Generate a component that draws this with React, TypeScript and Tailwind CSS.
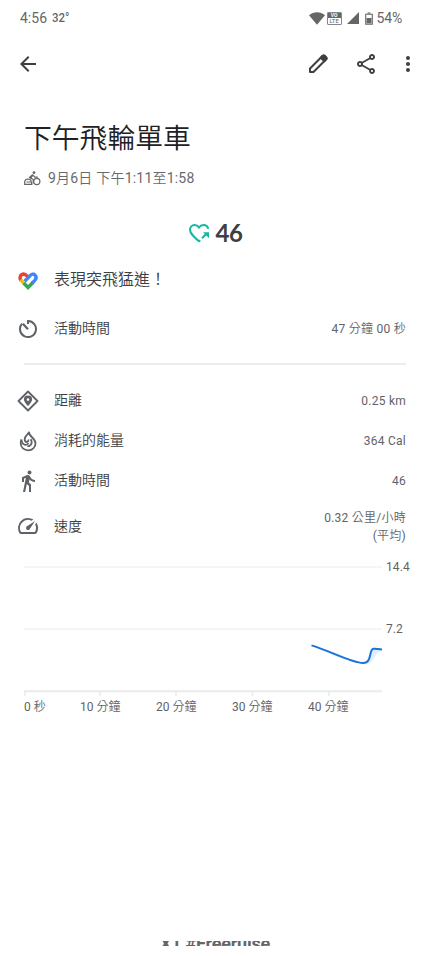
import type { ReactNode } from "react";
import { MdArrowBack, MdDirectionsWalk, MdMoreVert, MdOutlineShare, MdOutlineSpeed } from "react-icons/md";

// Sets the Han characters a little lighter than the Latin ones beside them.
function Mixed({ text }: { text: string }) {
  return (
    <>
      {text.split(/([\u4e00-\u9fff]+)/).map((part, i) =>
        i % 2 ? <span key={i} className="font-[350]">{part}</span> : part,
      )}
    </>
  );
}

function StatusBar() {
  return (
    <header className="flex h-9 items-center justify-between pl-5 pr-7 text-[#666]">
      <div className="flex items-center gap-[5px]">
        <span className="text-sm leading-5">4:56</span>
        <span className="origin-left scale-x-[0.95] text-xs font-medium leading-5">32°</span>
      </div>
      <div className="flex items-center">
        <svg width="16" height="13" viewBox="0 0 16 13" fill="#666">
          <path d="M0 3.200C4.500-.7 11.500-.7 16 3.200L8 12.800Z" />
        </svg>
        <span className="ml-[2px] flex h-[13px] w-[15px] flex-col overflow-hidden rounded-[1px] border border-[#888] text-center text-[6px] leading-[6px]">
          <span className="h-[5px] bg-[#666] text-[5px] font-bold leading-[5px] text-white">VO</span>
          <span className="leading-[6px]">LTE</span>
        </span>
        <svg className="ml-[5px]" width="12" height="12" viewBox="0 0 12 12" fill="#666">
          <path d="M12 0v12H0Z" />
        </svg>
        <svg className="ml-[6px]" width="8" height="13" viewBox="0 0 8 13" fill="none" stroke="#666">
          <path d="M2.500 1h3M.7 2.200h6.600v10H.7Z" strokeWidth="1.100" />
          <path d="M1.500 6h5v5.500h-5Z" fill="#666" stroke="none" />
        </svg>
        <span className="ml-1 text-sm leading-5 tracking-[-0.2px]">54%</span>
      </div>
    </header>
  );
}

function PencilIcon() {
  return (
    <svg className="ml-auto" width="24" height="24" viewBox="0 0 24 24" fill="none" stroke="#3c4043" strokeWidth="2" strokeLinejoin="round">
      <path d="M4 20v-3.500L16.700 3.800a1.300 1.300 0 0 1 1.900 0l1.600 1.600a1.300 1.300 0 0 1 0 1.900L7.500 20Z" />
      <path d="m14.800 5.700 3.500 3.500 1.900-1.900a1.300 1.300 0 0 0 0-1.900l-1.600-1.600a1.300 1.300 0 0 0-1.900 0Z" fill="#3c4043" />
    </svg>
  );
}

function SpinBikeIcon() {
  return (
    <svg width="17" height="15" viewBox="0 0 17 15" fill="none" stroke="#666" strokeWidth="1.200">
      <circle cx="12.800" cy="10.500" r="3.100" />
      <circle cx="10" cy="1.700" r="1.400" fill="#666" stroke="none" />
      <path d="M.7 13.400V10.300C1.500 8 5 7 7 9.700l.8 3.700ZM2.500 11h4M9 4 6 6.500l3.200 2v4M8.500 3.700l2.300 2.500h3" />
      <path d="M8.800 4 6 6.500l2 1.300" strokeWidth="1.800" />
    </svg>
  );
}

function MoveHeart() {
  return (
    <svg width="22" height="20" viewBox="0 0 22 20" fill="none" stroke="#16b8a0" strokeWidth="2">
      <path d="M12.300 17.200 11 18.300C5.500 13.400 2 10.500 2 6.800 2 4 4 2 6.500 2 8.300 2 10 3 11 4.500 12 3 13.700 2 15.500 2c2.500 0 4.300 1.500 4.700 3.800M14 15.300l4.500-4.500" />
      <path d="M15 9.200h6v6Z" fill="#16b8a0" stroke="none" />
    </svg>
  );
}

function FitLogo() {
  return (
    <svg width="20" height="18" viewBox="0 0 20 18" fill="none" strokeWidth="3.500">
      <path d="M3.100 8.400C1.300 6.300 1.900 2.500 5.400 2.100 7 2 8.200 3.100 9.600 4.500" stroke="#e84335" />
      <path d="m2.600 7.800 4.200 4.400" stroke="#fbbc05" />
      <path d="m5.700 11 4.300 4.400 5.200-5.200" stroke="#34a853" />
      <path d="m6.700 9.200 5.600-5.800c1.600-1.600 3.500-1.700 4.700-.3 1.500 1.700 1.300 3.600-.2 5.300L14 11.300" stroke="#4285f4" />
    </svg>
  );
}

function TimerIcon() {
  return (
    <svg width="20" height="20" viewBox="0 0 20 20" fill="none" stroke="#5f6368" strokeWidth="2">
      <path d="M10 5V2A8 8 0 1 1 4 4.700" />
      <path d="m4.800 4.800 5.200 5.500" strokeWidth="2.200" />
    </svg>
  );
}

function DistanceIcon() {
  return (
    <svg width="22" height="22" viewBox="0 0 22 22">
      <path d="m11 1.500 9.500 9.500-9.500 9.500L1.500 11Z" fill="none" stroke="#5f6368" strokeWidth="1.800" strokeLinejoin="round" />
      <path fillRule="evenodd" d="M11 5.500A4.100 4.100 0 0 0 6.900 9.600c0 2.500 4.100 6.600 4.100 6.600s4.100-4.100 4.100-6.600A4.100 4.100 0 0 0 11 5.500Zm0 2.800a1.300 1.300 0 1 1 0 2.600 1.300 1.300 0 0 1 0-2.600Z" fill="#5f6368" />
    </svg>
  );
}

function FlameIcon() {
  return (
    <svg width="18" height="22" viewBox="0 0 18 22" fill="none" stroke="#5f6368" strokeWidth="1.800">
      <path d="M10.500 1.800C9 4.500 5.700 6 5.700 9.300c0 1.700 1 2.700 2.100 2.700s1.800-1 1.500-2.500M10 2c-.5 4.500 6.500 6 6.500 11.300 0 4.200-3.200 7-7.300 7s-7.500-2.800-7.500-7c0-1.500.2-2.700.7-3.700" />
      <path d="M2.500 9.500c.2 3 1.300 5 3.700 5.300 1.800.2 2.800-.7 3.400-1.700M11.700 9.200c1.500 2.500 1.200 4.500-.5 6.100-.8.8-1.800 1-2.800.9" />
    </svg>
  );
}

function Row({ icon, label, value = "", className }: { icon: ReactNode; label: string; value?: string; className: string }) {
  return (
    <div className={`flex items-center pl-4 pr-6 ${className}`}>
      <span className="flex w-6 shrink-0 justify-center pb-px text-[#5f6368]">{icon}</span>
      <span className="ml-[14px] flex-1 pb-[2px] font-[350]">{label}</span>
      <span className="whitespace-pre-line text-right text-xs leading-[18px] tracking-[0.25px] text-[#5f6368]">
        <Mixed text={value} />
      </span>
    </div>
  );
}

function SpeedChart() {
  return (
    <figure className="text-xs text-[#5f6368]">
      <div className="flex pl-6">
        <svg width="358" height="139" viewBox="0 0 358 139" fill="none">
          <path d="M0 7h358M0 69h358" stroke="#f1f2f3" strokeWidth="1.500" />
          <path d="M288 85.500c20 6 43 17.500 55 17.500l5-14 10 1c-7 2-7 12-15 14-12 1-38-10-55-18.500Z" fill="#e0efff" />
          <path d="M287.500 85.400C305 90.500 328 103 339 103c9.500 0 5.500-13.500 10.500-14.200 2.500-.3 4.500.5 8.500.7" stroke="#1a73d8" strokeWidth="2" />
          <path d="M0 131.300h358" stroke="#e9ebed" strokeWidth="2" />
          <path d="M.7 131v5M75.800 131v5M152 131v5M228.500 131v5M304.800 131v5" stroke="#e9ebed" strokeWidth="1.500" />
        </svg>
        <div className="-mt-px flex flex-col gap-[46px] pl-1 leading-4 tracking-[0.1px]">
          <span>14.4</span>
          <span>7.2</span>
        </div>
      </div>
      <figcaption className="flex pl-6 leading-4">
        <span className="w-[56px]"><Mixed text="0 秒" /></span>
        <span className="w-[76px]"><Mixed text="10 分鐘" /></span>
        <span className="w-[76px]"><Mixed text="20 分鐘" /></span>
        <span className="w-[76px]"><Mixed text="30 分鐘" /></span>
        <span><Mixed text="40 分鐘" /></span>
      </figcaption>
    </figure>
  );
}

export default function App() {
  return (
    <main lang="zh-Hant" className="flex h-[956px] w-[430px] flex-col overflow-hidden bg-white font-[Roboto,'Noto_Sans_CJK_TC',sans-serif] text-sm text-[#3c4043]">
      <StatusBar />
      <nav className="flex h-14 items-center pl-4 pr-[12px] text-[#3c4043]">
        <MdArrowBack size={24} />
        <PencilIcon />
        <MdOutlineShare size={24} className="ml-6" />
        <MdMoreVert size={24} className="-mr-[2px] ml-[18px]" />
      </nav>
      <h1 className="mt-[25px] pl-6 text-[27.800px] font-[350] leading-[44px] text-[#202124]">下午飛輪單車</h1>
      <div className="mt-[7px] flex h-5 items-center gap-[7px] pl-6 text-[#666a6e]">
        <SpinBikeIcon />
        <span className="tracking-[0.2px]"><Mixed text="9月6日 下午1:11至1:58" /></span>
      </div>
      <div className="mt-[29px] flex h-8 items-center justify-center gap-[5px] pl-px">
        <MoveHeart />
        <span className="font-['Lato',sans-serif] text-2xl font-bold tracking-[-0.3px]">46</span>
      </div>
      <Row className="mt-4 h-8 text-base" icon={<FitLogo />} label="表現突飛猛進！" />
      <Row className="mt-4 h-8" icon={<TimerIcon />} label="活動時間" value="47 分鐘 00 秒" />
      <hr className="mb-[16px] ml-6 mr-6 mt-[18px] border-t-2 border-[#ebedef]" />
      <Row className="h-10" icon={<DistanceIcon />} label="距離" value="0.25 km" />
      <Row className="h-10" icon={<FlameIcon />} label="消耗的能量" value="364 Cal" />
      <Row className="h-10" icon={<MdDirectionsWalk size={24} />} label="活動時間" value="46" />
      <Row className="mb-[8px] h-[51px]" icon={<MdOutlineSpeed size={24} />} label="速度" value={"0.32 公里/小時\n(平均)"} />
      <SpeedChart />
      <footer className="mb-[10px] mt-auto flex h-[5px] items-center justify-center overflow-hidden text-lg font-bold leading-5 text-[#666]">
        <span className="tracking-[-0.2px]">X1 #Freeruise</span>
      </footer>
    </main>
  );
}
